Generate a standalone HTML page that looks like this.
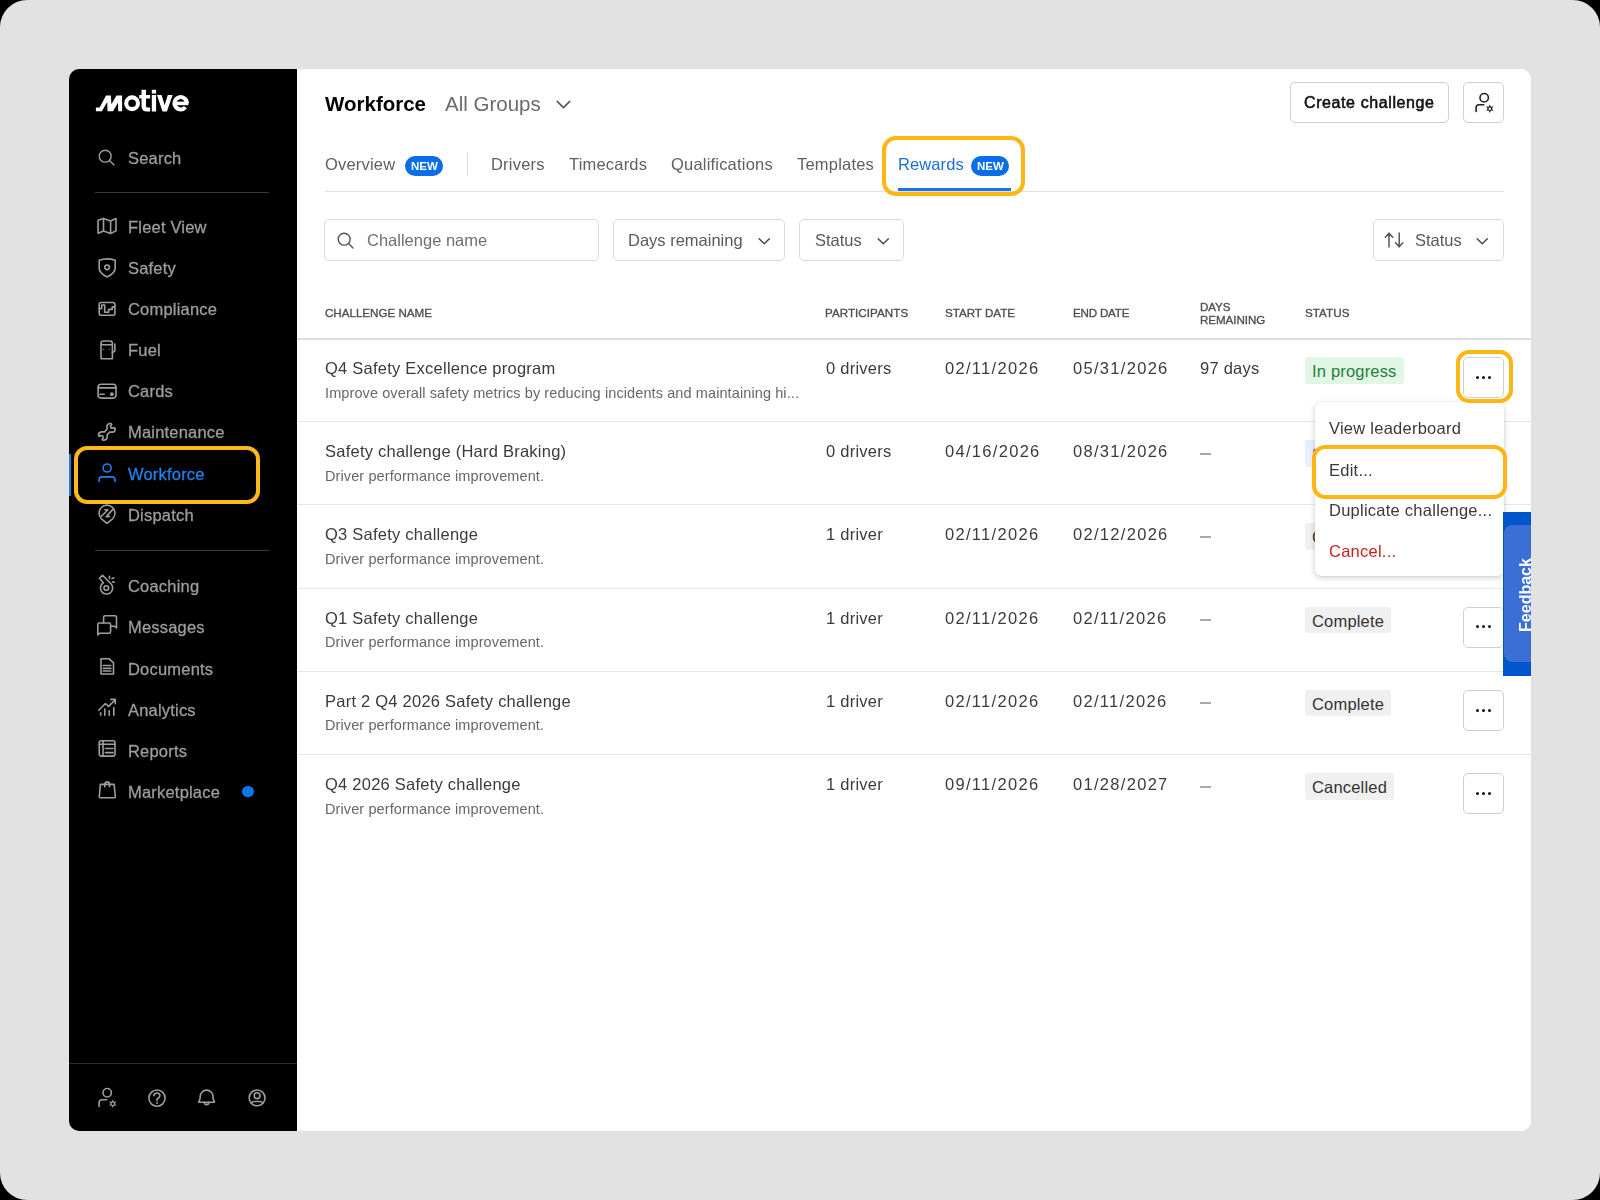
<!DOCTYPE html>
<html><head><meta charset="utf-8">
<style>
*{box-sizing:border-box;margin:0;padding:0}
html,body{width:1600px;height:1200px;overflow:hidden;background:#000}
body{font-family:"Liberation Sans",sans-serif;position:relative}
.a{position:absolute}
.t{position:absolute;line-height:1;white-space:nowrap;will-change:transform}
.ic{position:absolute;fill:none;stroke-linecap:round;stroke-linejoin:round;overflow:visible}
</style></head><body>
<div class="a" style="left:0;top:0;width:1600px;height:1200px;background:#e2e2e2;border-radius:27px"></div>
<div class="a" style="left:69px;top:69px;width:1462px;height:1062px;background:#fff;border-radius:10px"></div>
<div class="a" style="left:69px;top:69px;width:228px;height:1062px;background:#000;border-radius:10px 0 0 10px"></div>

<svg class="a" style="left:0;top:0" width="300" height="130" viewBox="0 0 300 130"><g fill="#fff">
<path d="M95.9 111.3 V107.56 H99.6 L106 95.56 H110.9 L111.4 104.2 L116.5 95.56 H122.1 V111.3 H118.2 L118 102.7 L113 111.3 H107.5 L107.2 102.1 L101.9 111.3 Z"/>
<circle cx="132.1" cy="103.25" r="5.9" fill="none" stroke="#fff" stroke-width="4.1"/>
<path d="M141.5 89.75 H146 V95 H150.1 V98.4 H146 V106 Q146 107.6 147.6 107.6 H150.1 V111.5 H147 Q141.5 111.5 141.5 106 V98.4 H139.25 V95 H141.5 Z"/>
<rect x="151.8" y="89.75" width="4.3" height="3.8"/><rect x="151.8" y="95" width="4.3" height="16.5"/>
<path d="M157 95 H161.6 L164.6 105.2 L167.8 95 H172.6 L166.9 111.5 H162.5 Z"/>
<path d="M186.9 103.25 A6.2 6.2 0 1 0 185.45 107.24" fill="none" stroke="#fff" stroke-width="4"/>
<rect x="174" y="101.6" width="14.4" height="3.6"/>
</g></svg>
<svg class="ic" style="left:96px;top:147px;color:#9d9d9d" width="21" height="21" viewBox="0 0 24 24" stroke="currentColor" stroke-width="1.6"><circle cx="10.5" cy="10.5" r="6.8"/><path d="M15.5 15.5 L20.5 20.5"/></svg>
<div class="t" style="left:128px;top:149.63px;font-size:16.5px;color:#9d9d9d;font-weight:400;letter-spacing:0.2px;-webkit-text-stroke:0.3px #9d9d9d">Search</div>
<div class="a" style="left:95px;top:192px;width:174px;height:1px;background:#3a3a3a"></div>
<svg class="ic" style="left:97px;top:213.2px;color:#9d9d9d" width="26" height="26" viewBox="0 0 26 26" stroke="currentColor" stroke-width="1.6"><path d="M1.1 7.3 L6.5 5.4 L13.6 8.1 L19 5.6 V17.7 L13.6 20.6 L6.5 18.1 L1.1 20.2 Z M6.5 5.4 V18.1 M13.6 8.1 V20.6"/></svg>
<div class="t" style="left:128px;top:218.73px;font-size:16.5px;color:#9d9d9d;font-weight:400;letter-spacing:0.2px;-webkit-text-stroke:0.3px #9d9d9d">Fleet View</div>
<svg class="ic" style="left:97px;top:254.5px;color:#9d9d9d" width="26" height="26" viewBox="0 0 26 26" stroke="currentColor" stroke-width="1.6"><path d="M2.2 5.3 Q10.1 2.4 18.2 5.3 V13 C18.2 17 14.2 20 10.1 22 C6 20 2.2 17 2.2 13 Z"/><circle cx="10.1" cy="12.3" r="2.3"/></svg>
<div class="t" style="left:128px;top:260.03px;font-size:16.5px;color:#9d9d9d;font-weight:400;letter-spacing:0.2px;-webkit-text-stroke:0.3px #9d9d9d">Safety</div>
<svg class="ic" style="left:97px;top:295.6px;color:#9d9d9d" width="26" height="26" viewBox="0 0 26 26" stroke="currentColor" stroke-width="1.6"><rect x="2.2" y="6.5" width="15.7" height="12.7" rx="2"/><path d="M2.2 12.6 H4.7 V9 H7.7 V16.2 H11.6 V13.4 H15.2 V10.9 H17.9"/></svg>
<div class="t" style="left:128px;top:301.13px;font-size:16.5px;color:#9d9d9d;font-weight:400;letter-spacing:0.2px;-webkit-text-stroke:0.3px #9d9d9d">Compliance</div>
<svg class="ic" style="left:97px;top:336.7px;color:#9d9d9d" width="26" height="26" viewBox="0 0 26 26" stroke="currentColor" stroke-width="1.6"><path d="M4 21.7 V6.5 Q4 4 6.5 4 H12.9 Q15.4 4 15.4 6.5 V21.7 Z M4 7.8 H15.4"/><path d="M15.4 15.3 Q17.9 15.3 17.9 12.8 V7"/><circle cx="6.6" cy="12.3" r=".6" fill="currentColor" stroke="none"/><circle cx="12.1" cy="12.3" r=".6" fill="currentColor" stroke="none"/></svg>
<div class="t" style="left:128px;top:342.23px;font-size:16.5px;color:#9d9d9d;font-weight:400;letter-spacing:0.2px;-webkit-text-stroke:0.3px #9d9d9d">Fuel</div>
<svg class="ic" style="left:97px;top:377.8px;color:#9d9d9d" width="26" height="26" viewBox="0 0 26 26" stroke="currentColor" stroke-width="1.6"><rect x="1.1" y="6.3" width="17.9" height="13.8" rx="3"/><path d="M1.1 9.9 H19 M3 16.2 H7.2"/><circle cx="14.9" cy="16.2" r="1.9" fill="currentColor" stroke="none"/></svg>
<div class="t" style="left:128px;top:383.33px;font-size:16.5px;color:#9d9d9d;font-weight:400;letter-spacing:0.2px;-webkit-text-stroke:0.3px #9d9d9d">Cards</div>
<svg class="ic" style="left:97px;top:418.9px;color:#9d9d9d" width="26" height="26" viewBox="0 0 26 26" stroke="currentColor" stroke-width="1.6"><path d="M10 6.9 Q10.5 4.8 13.6 4.3 L14.8 5.3 L13.6 7.1 Q13.8 9.3 15.4 9.3 L17.2 8.5 L18.2 9.7 Q18.2 13.1 15.5 13.1 H12.8 L10.2 15.7 V18.5 Q9.8 20.8 6.4 21.3 L5.2 20.5 L6.4 18.3 Q6 16.5 4 16.5 L2 17.5 L1.4 16.3 Q1.8 12.9 4.8 12.9 H7.4 L10 10.3 Z"/></svg>
<div class="t" style="left:128px;top:424.43px;font-size:16.5px;color:#9d9d9d;font-weight:400;letter-spacing:0.2px;-webkit-text-stroke:0.3px #9d9d9d">Maintenance</div>
<svg class="ic" style="left:97px;top:460px;color:#1f82ec" width="26" height="26" viewBox="0 0 26 26" stroke="currentColor" stroke-width="1.6"><circle cx="10.1" cy="8" r="4"/><path d="M2.1 21.6 V19.9 Q2.1 16.9 5.1 16.9 H15 Q18 16.9 18 19.9 V21.6"/></svg>
<div class="t" style="left:128px;top:465.53px;font-size:16.5px;color:#1f82ec;font-weight:400;letter-spacing:0.2px;-webkit-text-stroke:0.3px #1f82ec">Workforce</div>
<svg class="ic" style="left:97px;top:501.1px;color:#9d9d9d" width="26" height="26" viewBox="0 0 26 26" stroke="currentColor" stroke-width="1.6"><path d="M10 22.3 L4.34 17.76 A8 8 0 1 1 15.66 17.76 Z"/><path d="M7.9 8.8 H10.9 L4.4 15.2 M15.9 8.4 L9.3 15.6 H12.3"/></svg>
<div class="t" style="left:128px;top:506.63px;font-size:16.5px;color:#9d9d9d;font-weight:400;letter-spacing:0.2px;-webkit-text-stroke:0.3px #9d9d9d">Dispatch</div>
<svg class="ic" style="left:97px;top:572.5px;color:#9d9d9d" width="26" height="26" viewBox="0 0 26 26" stroke="currentColor" stroke-width="1.6"><path d="M6.3 9.8 L2.5 5.3 L5.5 2.3 L14.2 11 A6.1 6.1 0 1 1 6.3 9.8 Z"/><circle cx="9.3" cy="15" r="2.3"/><path d="M12.5 3.3 V5.5 M15.1 5.6 L16.8 4.8 M15.7 8.9 L17.4 9.2"/></svg>
<div class="t" style="left:128px;top:578.03px;font-size:16.5px;color:#9d9d9d;font-weight:400;letter-spacing:0.2px;-webkit-text-stroke:0.3px #9d9d9d">Coaching</div>
<svg class="ic" style="left:97px;top:613.75px;color:#9d9d9d" width="26" height="26" viewBox="0 0 26 26" stroke="currentColor" stroke-width="1.6"><path d="M6.6 9.05 V3.3 Q6.6 1.8 8.1 1.8 H18 Q19.5 1.8 19.5 3.3 V14 L17.7 12.25 H13.6"/><path d="M0.8 21 V10.55 Q0.8 9.05 2.3 9.05 H12.1 Q13.6 9.05 13.6 10.55 V17.8 Q13.6 19.3 12.1 19.3 H2.5 Z"/></svg>
<div class="t" style="left:128px;top:619.28px;font-size:16.5px;color:#9d9d9d;font-weight:400;letter-spacing:0.2px;-webkit-text-stroke:0.3px #9d9d9d">Messages</div>
<svg class="ic" style="left:97px;top:655px;color:#9d9d9d" width="26" height="26" viewBox="0 0 26 26" stroke="currentColor" stroke-width="1.6"><path d="M4 3.8 H12.2 L16.5 7.9 V19 H4 Z M6.3 10.5 H13.9 M6.3 13.4 H13.9 M6.3 16 H13.9"/></svg>
<div class="t" style="left:128px;top:660.53px;font-size:16.5px;color:#9d9d9d;font-weight:400;letter-spacing:0.2px;-webkit-text-stroke:0.3px #9d9d9d">Documents</div>
<svg class="ic" style="left:97px;top:696.25px;color:#9d9d9d" width="26" height="26" viewBox="0 0 26 26" stroke="currentColor" stroke-width="1.6"><path d="M1.7 14.2 L8.4 7.5 L11.6 10.4 L18.3 3.7 M13.9 3.4 H18.3 V7.8"/><path d="M3.7 16.8 V19.2 M7.8 13 V19.2 M12.2 14.8 V19.2 M16.8 11.5 V19.2"/></svg>
<div class="t" style="left:128px;top:701.78px;font-size:16.5px;color:#9d9d9d;font-weight:400;letter-spacing:0.2px;-webkit-text-stroke:0.3px #9d9d9d">Analytics</div>
<svg class="ic" style="left:97px;top:737px;color:#9d9d9d" width="26" height="26" viewBox="0 0 26 26" stroke="currentColor" stroke-width="1.6"><rect x="2.25" y="3.7" width="15.75" height="15.4" rx="2"/><path d="M2.25 7.2 H18 M6.05 3.7 V19.1 M8.4 11.5 H16 M8.4 15.6 H16"/></svg>
<div class="t" style="left:128px;top:742.53px;font-size:16.5px;color:#9d9d9d;font-weight:400;letter-spacing:0.2px;-webkit-text-stroke:0.3px #9d9d9d">Reports</div>
<svg class="ic" style="left:97px;top:778px;color:#9d9d9d" width="26" height="26" viewBox="0 0 26 26" stroke="currentColor" stroke-width="1.6"><path d="M3.4 6.4 H17.1 L18.3 18.3 Q18.4 19.8 16.9 19.8 H3.7 Q2.2 19.8 2.3 18.3 Z"/><path d="M7.8 8.75 V6.2 A2.35 2.35 0 0 1 12.5 6.2 V8.75"/></svg>
<div class="t" style="left:128px;top:783.53px;font-size:16.5px;color:#9d9d9d;font-weight:400;letter-spacing:0.2px;-webkit-text-stroke:0.3px #9d9d9d">Marketplace</div>
<div class="a" style="left:95px;top:550px;width:174px;height:1px;background:#3a3a3a"></div>
<div class="a" style="left:242px;top:785.7px;width:11.5px;height:11.5px;border-radius:50%;background:#0e74ea"></div>
<div class="a" style="left:69px;top:1063px;width:228px;height:1px;background:#2e2e2e"></div>
<svg class="ic" style="left:97px;top:1086px;color:#9d9d9d" width="26" height="26" viewBox="0 0 26 26" stroke="currentColor" stroke-width="1.6"><circle cx="10.2" cy="6.75" r="4.2"/><path d="M2.1 20.4 V16.8 Q2.1 13.8 5.1 13.8 H9.7"/><path d="M15.8 13.4 L16.9 15.8 L19.5 15.6 L18 17.7 L19.5 19.8 L16.9 19.6 L15.8 22 L14.7 19.6 L12.1 19.8 L13.6 17.7 L12.1 15.6 L14.7 15.8 Z" fill="currentColor" stroke="none"/><circle cx="15.8" cy="17.7" r="1.2" fill="#000" stroke="none"/></svg>
<svg class="ic" style="left:147.4px;top:1086px;color:#9d9d9d" width="26" height="26" viewBox="0 0 26 26" stroke="currentColor" stroke-width="1.6"><circle cx="10" cy="12.1" r="8.1"/><path d="M6.9 9.6 Q7.2 7 10 7 Q12.9 7 12.9 9.8 Q12.9 11.6 10 13.2 V14.8"/><circle cx="10" cy="17" r=".9" fill="currentColor" stroke="none"/></svg>
<svg class="ic" style="left:197px;top:1086px;color:#9d9d9d" width="26" height="26" viewBox="0 0 26 26" stroke="currentColor" stroke-width="1.6"><path d="M2.2 16.2 Q1.2 16.2 2.4 14.6 Q3.2 13.4 3.2 10.5 A6.4 6.4 0 0 1 16 10.5 Q16 13.4 16.8 14.6 Q18 16.2 17 16.2 Z"/><path d="M7.4 16.4 A2.2 2.2 0 0 0 11.8 16.4"/></svg>
<svg class="ic" style="left:247px;top:1086px;color:#9d9d9d" width="26" height="26" viewBox="0 0 26 26" stroke="currentColor" stroke-width="1.6"><circle cx="10.1" cy="11.9" r="7.9"/><circle cx="10.1" cy="9.7" r="2.9"/><path d="M4.3 17.4 Q5 15.5 7.5 15.5 H12.7 Q15.2 15.5 15.9 17.4"/></svg>
<div class="a" style="left:69px;top:453.5px;width:2px;height:42px;background:#1a7fe0"></div>
<div class="a" style="left:74px;top:445.7px;width:185.7px;height:58px;border:4.6px solid #fdb91c;border-radius:13px"></div>
<div class="t" style="left:325px;top:93.55px;font-size:20.5px;color:#000;font-weight:700;letter-spacing:0px">Workforce</div>
<div class="t" style="left:445px;top:93.55px;font-size:20.5px;color:#6b6b6b;font-weight:400;letter-spacing:0px">All Groups</div>
<svg class="ic" style="left:551px;top:92.1px;color:#555" width="25" height="25" viewBox="0 0 24 24" stroke="currentColor" stroke-width="1.45"><path d="M6 9 L12 15 L18 9"/></svg>
<div class="a" style="left:1289.7px;top:82.2px;width:159.5px;height:40.8px;border:1.3px solid #d0d0d0;border-radius:5px"></div>
<div class="t" style="left:1304px;top:95.36px;font-size:16px;color:#111;font-weight:400;letter-spacing:0.6px;-webkit-text-stroke:0.55px #111">Create challenge</div>
<div class="a" style="left:1463.3px;top:82.2px;width:40.7px;height:40.8px;border:1.3px solid #d0d0d0;border-radius:5px"></div>
<svg class="ic" style="left:1473.5px;top:91.25px;color:#222" width="26" height="26" viewBox="0 0 26 26" stroke="currentColor" stroke-width="1.6"><circle cx="10.2" cy="6.75" r="4.2"/><path d="M2.1 20.4 V16.8 Q2.1 13.8 5.1 13.8 H9.7"/><path d="M15.8 13.4 L16.9 15.8 L19.5 15.6 L18 17.7 L19.5 19.8 L16.9 19.6 L15.8 22 L14.7 19.6 L12.1 19.8 L13.6 17.7 L12.1 15.6 L14.7 15.8 Z" fill="currentColor" stroke="none"/><circle cx="15.8" cy="17.7" r="1.2" fill="#fff" stroke="none"/></svg>
<div class="t" style="left:325px;top:156.13px;font-size:16.5px;color:#5f5f5f;font-weight:400;letter-spacing:0.2px">Overview</div>
<div class="a" style="left:405px;top:155.5px;width:38.3px;height:20px;border-radius:10px;background:#0a6ee6"></div>
<div class="t" style="left:411.3px;top:160.77px;font-size:11.5px;color:#fff;font-weight:700;letter-spacing:0px">NEW</div>
<div class="a" style="left:466.5px;top:153px;width:1.5px;height:22.5px;background:#d9d9d9"></div>
<div class="t" style="left:491px;top:156.13px;font-size:16.5px;color:#5f5f5f;font-weight:400;letter-spacing:0.2px">Drivers</div>
<div class="t" style="left:569px;top:156.13px;font-size:16.5px;color:#5f5f5f;font-weight:400;letter-spacing:0.2px">Timecards</div>
<div class="t" style="left:670.7px;top:156.13px;font-size:16.5px;color:#5f5f5f;font-weight:400;letter-spacing:0.2px">Qualifications</div>
<div class="t" style="left:797.3px;top:156.13px;font-size:16.5px;color:#5f5f5f;font-weight:400;letter-spacing:0.2px">Templates</div>
<div class="t" style="left:897.5px;top:156.13px;font-size:16.5px;color:#1a6fd6;font-weight:400;letter-spacing:0.1px">Rewards</div>
<div class="a" style="left:971px;top:155.5px;width:38.3px;height:20px;border-radius:10px;background:#0a6ee6"></div>
<div class="t" style="left:977.3px;top:160.77px;font-size:11.5px;color:#fff;font-weight:700;letter-spacing:0px">NEW</div>
<div class="a" style="left:325px;top:190.5px;width:1179px;height:1px;background:#e0e0e0"></div>
<div class="a" style="left:897.5px;top:188px;width:113px;height:3px;background:#1a73e0"></div>
<div class="a" style="left:882px;top:135.8px;width:143.1px;height:60.7px;border:4.5px solid #fdb614;border-radius:14px"></div>
<div class="a" style="left:324.2px;top:219.2px;width:274.6px;height:41.6px;border:1.5px solid #dadada;border-radius:5px"></div>
<svg class="ic" style="left:335px;top:229.5px;color:#555" width="21" height="21" viewBox="0 0 24 24" stroke="currentColor" stroke-width="1.6"><circle cx="10.5" cy="10.5" r="6.8"/><path d="M15.5 15.5 L20.5 20.5"/></svg>
<div class="t" style="left:367px;top:231.63px;font-size:16.5px;color:#707070;font-weight:400;letter-spacing:0px">Challenge name</div>
<div class="a" style="left:612.5px;top:219.2px;width:172.2px;height:41.6px;border:1.5px solid #dadada;border-radius:5px"></div>
<div class="t" style="left:627.6px;top:231.63px;font-size:16.5px;color:#5a5a5a;font-weight:400;letter-spacing:0px">Days remaining</div>
<svg class="ic" style="left:753.6px;top:231.3px;color:#444" width="20.5" height="20.5" viewBox="0 0 24 24" stroke="currentColor" stroke-width="1.6"><path d="M6 9 L12 15 L18 9"/></svg>
<div class="a" style="left:799.2px;top:219.2px;width:104.8px;height:41.6px;border:1.5px solid #dadada;border-radius:5px"></div>
<div class="t" style="left:815px;top:231.63px;font-size:16.5px;color:#5a5a5a;font-weight:400;letter-spacing:0px">Status</div>
<svg class="ic" style="left:872.6px;top:231.3px;color:#444" width="20.5" height="20.5" viewBox="0 0 24 24" stroke="currentColor" stroke-width="1.6"><path d="M6 9 L12 15 L18 9"/></svg>
<div class="a" style="left:1373.2px;top:219.2px;width:130.8px;height:41.6px;border:1.5px solid #dadada;border-radius:5px"></div>
<svg class="ic" style="left:1380px;top:228px" width="30" height="24" viewBox="0 0 30 24" stroke="#555" stroke-width="1.5"><path d="M9 5 V19 M5.3 9.2 L9 5.2 L12.7 9.2 M19.2 5 V19 M15.5 14.8 L19.2 18.8 L22.9 14.8"/></svg>
<div class="t" style="left:1415.4px;top:231.63px;font-size:16.5px;color:#5a5a5a;font-weight:400;letter-spacing:0px">Status</div>
<svg class="ic" style="left:1472.2px;top:231.3px;color:#444" width="20.5" height="20.5" viewBox="0 0 24 24" stroke="currentColor" stroke-width="1.6"><path d="M6 9 L12 15 L18 9"/></svg>
<div class="t" style="left:325px;top:307.28px;font-size:11.6px;color:#4f4f4f;font-weight:400;letter-spacing:0.0px;-webkit-text-stroke:0.35px #4f4f4f">CHALLENGE NAME</div>
<div class="t" style="left:825.3px;top:307.28px;font-size:11.6px;color:#4f4f4f;font-weight:400;letter-spacing:0.06px;-webkit-text-stroke:0.35px #4f4f4f">PARTICIPANTS</div>
<div class="t" style="left:944.75px;top:307.28px;font-size:11.6px;color:#4f4f4f;font-weight:400;letter-spacing:0.0px;-webkit-text-stroke:0.35px #4f4f4f">START DATE</div>
<div class="t" style="left:1072.5px;top:307.28px;font-size:11.6px;color:#4f4f4f;font-weight:400;letter-spacing:-0.2px;-webkit-text-stroke:0.35px #4f4f4f">END DATE</div>
<div class="t" style="left:1200px;top:300.78px;font-size:11.6px;color:#4f4f4f;font-weight:400;letter-spacing:-0.1px;-webkit-text-stroke:0.35px #4f4f4f">DAYS</div>
<div class="t" style="left:1200px;top:314.38px;font-size:11.6px;color:#4f4f4f;font-weight:400;letter-spacing:-0.05px;-webkit-text-stroke:0.35px #4f4f4f">REMAINING</div>
<div class="t" style="left:1305.4px;top:307.28px;font-size:11.6px;color:#4f4f4f;font-weight:400;letter-spacing:0.08px;-webkit-text-stroke:0.35px #4f4f4f">STATUS</div>
<div class="a" style="left:297px;top:338px;width:1234px;height:2px;background:#dcdcdc"></div>
<div class="t" style="left:325px;top:360.03px;font-size:16.5px;color:#3b3b3b;font-weight:400;letter-spacing:0.24px">Q4 Safety Excellence program</div>
<div class="t" style="left:325px;top:385.53px;font-size:14.5px;color:#676767;font-weight:400;letter-spacing:0.1px">Improve overall safety metrics by reducing incidents and maintaining hi...</div>
<div class="t" style="left:825.5px;top:360.03px;font-size:16.5px;color:#3b3b3b;font-weight:400;letter-spacing:0.25px">0 drivers</div>
<div class="t" style="left:945px;top:360.03px;font-size:16.5px;color:#3b3b3b;font-weight:400;letter-spacing:1.3px">02/11/2026</div>
<div class="t" style="left:1072.5px;top:360.03px;font-size:16.5px;color:#3b3b3b;font-weight:400;letter-spacing:1.3px">05/31/2026</div>
<div class="t" style="left:1200.3px;top:360.03px;font-size:16.5px;color:#3b3b3b;font-weight:400;letter-spacing:0.25px">97 days</div>
<div class="a" style="left:1305px;top:357.0px;height:26.7px;padding:0 7px;background:#e2f6e6;border-radius:3px;font-size:16.5px;line-height:28.6px;overflow:hidden;letter-spacing:0.18px;color:#25803c;white-space:nowrap">In progress</div>
<div class="a" style="left:1463px;top:356.9px;width:41px;height:41px;border:1.2px solid #cfcfcf;border-radius:5px;background:#fff"></div>
<div class="a" style="left:1476.3px;top:375.7px;width:3.2px;height:3.2px;border-radius:50%;background:#111"></div>
<div class="a" style="left:1482.1px;top:375.7px;width:3.2px;height:3.2px;border-radius:50%;background:#111"></div>
<div class="a" style="left:1487.9px;top:375.7px;width:3.2px;height:3.2px;border-radius:50%;background:#111"></div>
<div class="a" style="left:297px;top:421.2px;width:1234px;height:1px;background:#e6e6e6"></div>
<div class="t" style="left:325px;top:443.23px;font-size:16.5px;color:#3b3b3b;font-weight:400;letter-spacing:0.24px">Safety challenge (Hard Braking)</div>
<div class="t" style="left:325px;top:468.73px;font-size:14.5px;color:#676767;font-weight:400;letter-spacing:0.1px">Driver performance improvement.</div>
<div class="t" style="left:825.5px;top:443.23px;font-size:16.5px;color:#3b3b3b;font-weight:400;letter-spacing:0.25px">0 drivers</div>
<div class="t" style="left:945px;top:443.23px;font-size:16.5px;color:#3b3b3b;font-weight:400;letter-spacing:1.3px">04/16/2026</div>
<div class="t" style="left:1072.5px;top:443.23px;font-size:16.5px;color:#3b3b3b;font-weight:400;letter-spacing:1.3px">08/31/2026</div>
<div class="a" style="left:1199.5px;top:453px;width:11.3px;height:1.5px;background:#a9a9a9"></div>
<div class="a" style="left:1305px;top:440.2px;height:26.7px;padding:0 7px;background:#e5f0fc;border-radius:3px;font-size:16.5px;line-height:28.6px;overflow:hidden;letter-spacing:0.18px;color:#1a5fb4;white-space:nowrap">Scheduled</div>
<div class="a" style="left:1463px;top:440.1px;width:41px;height:41px;border:1.2px solid #cfcfcf;border-radius:5px;background:#fff"></div>
<div class="a" style="left:1476.3px;top:458.9px;width:3.2px;height:3.2px;border-radius:50%;background:#111"></div>
<div class="a" style="left:1482.1px;top:458.9px;width:3.2px;height:3.2px;border-radius:50%;background:#111"></div>
<div class="a" style="left:1487.9px;top:458.9px;width:3.2px;height:3.2px;border-radius:50%;background:#111"></div>
<div class="a" style="left:297px;top:504.4px;width:1234px;height:1px;background:#e6e6e6"></div>
<div class="t" style="left:325px;top:526.43px;font-size:16.5px;color:#3b3b3b;font-weight:400;letter-spacing:0.24px">Q3 Safety challenge</div>
<div class="t" style="left:325px;top:551.93px;font-size:14.5px;color:#676767;font-weight:400;letter-spacing:0.1px">Driver performance improvement.</div>
<div class="t" style="left:825.5px;top:526.43px;font-size:16.5px;color:#3b3b3b;font-weight:400;letter-spacing:0.25px">1 driver</div>
<div class="t" style="left:945px;top:526.43px;font-size:16.5px;color:#3b3b3b;font-weight:400;letter-spacing:1.3px">02/11/2026</div>
<div class="t" style="left:1072.5px;top:526.43px;font-size:16.5px;color:#3b3b3b;font-weight:400;letter-spacing:1.3px">02/12/2026</div>
<div class="a" style="left:1199.5px;top:536px;width:11.3px;height:1.5px;background:#a9a9a9"></div>
<div class="a" style="left:1305px;top:523.4px;height:26.7px;padding:0 7px;background:#f0f0f0;border-radius:3px;font-size:16.5px;line-height:28.6px;overflow:hidden;letter-spacing:0.18px;color:#333;white-space:nowrap">Complete</div>
<div class="a" style="left:1463px;top:523.3px;width:41px;height:41px;border:1.2px solid #cfcfcf;border-radius:5px;background:#fff"></div>
<div class="a" style="left:1476.3px;top:542.1px;width:3.2px;height:3.2px;border-radius:50%;background:#111"></div>
<div class="a" style="left:1482.1px;top:542.1px;width:3.2px;height:3.2px;border-radius:50%;background:#111"></div>
<div class="a" style="left:1487.9px;top:542.1px;width:3.2px;height:3.2px;border-radius:50%;background:#111"></div>
<div class="a" style="left:297px;top:587.6px;width:1234px;height:1px;background:#e6e6e6"></div>
<div class="t" style="left:325px;top:609.63px;font-size:16.5px;color:#3b3b3b;font-weight:400;letter-spacing:0.24px">Q1 Safety challenge</div>
<div class="t" style="left:325px;top:635.13px;font-size:14.5px;color:#676767;font-weight:400;letter-spacing:0.1px">Driver performance improvement.</div>
<div class="t" style="left:825.5px;top:609.63px;font-size:16.5px;color:#3b3b3b;font-weight:400;letter-spacing:0.25px">1 driver</div>
<div class="t" style="left:945px;top:609.63px;font-size:16.5px;color:#3b3b3b;font-weight:400;letter-spacing:1.3px">02/11/2026</div>
<div class="t" style="left:1072.5px;top:609.63px;font-size:16.5px;color:#3b3b3b;font-weight:400;letter-spacing:1.3px">02/11/2026</div>
<div class="a" style="left:1199.5px;top:619px;width:11.3px;height:1.5px;background:#a9a9a9"></div>
<div class="a" style="left:1305px;top:606.6px;height:26.7px;padding:0 7px;background:#f0f0f0;border-radius:3px;font-size:16.5px;line-height:28.6px;overflow:hidden;letter-spacing:0.18px;color:#333;white-space:nowrap">Complete</div>
<div class="a" style="left:1463px;top:606.5px;width:41px;height:41px;border:1.2px solid #cfcfcf;border-radius:5px;background:#fff"></div>
<div class="a" style="left:1476.3px;top:625.3px;width:3.2px;height:3.2px;border-radius:50%;background:#111"></div>
<div class="a" style="left:1482.1px;top:625.3px;width:3.2px;height:3.2px;border-radius:50%;background:#111"></div>
<div class="a" style="left:1487.9px;top:625.3px;width:3.2px;height:3.2px;border-radius:50%;background:#111"></div>
<div class="a" style="left:297px;top:670.8px;width:1234px;height:1px;background:#e6e6e6"></div>
<div class="t" style="left:325px;top:692.83px;font-size:16.5px;color:#3b3b3b;font-weight:400;letter-spacing:0.24px">Part 2 Q4 2026 Safety challenge</div>
<div class="t" style="left:325px;top:718.33px;font-size:14.5px;color:#676767;font-weight:400;letter-spacing:0.1px">Driver performance improvement.</div>
<div class="t" style="left:825.5px;top:692.83px;font-size:16.5px;color:#3b3b3b;font-weight:400;letter-spacing:0.25px">1 driver</div>
<div class="t" style="left:945px;top:692.83px;font-size:16.5px;color:#3b3b3b;font-weight:400;letter-spacing:1.3px">02/11/2026</div>
<div class="t" style="left:1072.5px;top:692.83px;font-size:16.5px;color:#3b3b3b;font-weight:400;letter-spacing:1.3px">02/11/2026</div>
<div class="a" style="left:1199.5px;top:702px;width:11.3px;height:1.5px;background:#a9a9a9"></div>
<div class="a" style="left:1305px;top:689.8px;height:26.7px;padding:0 7px;background:#f0f0f0;border-radius:3px;font-size:16.5px;line-height:28.6px;overflow:hidden;letter-spacing:0.18px;color:#333;white-space:nowrap">Complete</div>
<div class="a" style="left:1463px;top:689.7px;width:41px;height:41px;border:1.2px solid #cfcfcf;border-radius:5px;background:#fff"></div>
<div class="a" style="left:1476.3px;top:708.5px;width:3.2px;height:3.2px;border-radius:50%;background:#111"></div>
<div class="a" style="left:1482.1px;top:708.5px;width:3.2px;height:3.2px;border-radius:50%;background:#111"></div>
<div class="a" style="left:1487.9px;top:708.5px;width:3.2px;height:3.2px;border-radius:50%;background:#111"></div>
<div class="a" style="left:297px;top:754.0px;width:1234px;height:1px;background:#e6e6e6"></div>
<div class="t" style="left:325px;top:776.03px;font-size:16.5px;color:#3b3b3b;font-weight:400;letter-spacing:0.24px">Q4 2026 Safety challenge</div>
<div class="t" style="left:325px;top:801.53px;font-size:14.5px;color:#676767;font-weight:400;letter-spacing:0.1px">Driver performance improvement.</div>
<div class="t" style="left:825.5px;top:776.03px;font-size:16.5px;color:#3b3b3b;font-weight:400;letter-spacing:0.25px">1 driver</div>
<div class="t" style="left:945px;top:776.03px;font-size:16.5px;color:#3b3b3b;font-weight:400;letter-spacing:1.3px">09/11/2026</div>
<div class="t" style="left:1072.5px;top:776.03px;font-size:16.5px;color:#3b3b3b;font-weight:400;letter-spacing:1.3px">01/28/2027</div>
<div class="a" style="left:1199.5px;top:786px;width:11.3px;height:1.5px;background:#a9a9a9"></div>
<div class="a" style="left:1305px;top:773.0px;height:26.7px;padding:0 7px;background:#f0f0f0;border-radius:3px;font-size:16.5px;line-height:28.6px;overflow:hidden;letter-spacing:0.18px;color:#333;white-space:nowrap">Cancelled</div>
<div class="a" style="left:1463px;top:772.9px;width:41px;height:41px;border:1.2px solid #cfcfcf;border-radius:5px;background:#fff"></div>
<div class="a" style="left:1476.3px;top:791.7px;width:3.2px;height:3.2px;border-radius:50%;background:#111"></div>
<div class="a" style="left:1482.1px;top:791.7px;width:3.2px;height:3.2px;border-radius:50%;background:#111"></div>
<div class="a" style="left:1487.9px;top:791.7px;width:3.2px;height:3.2px;border-radius:50%;background:#111"></div>
<div class="a" style="left:1315px;top:402px;width:189px;height:174px;background:#fff;border-radius:6px;box-shadow:0 2px 6px rgba(0,0,0,.18),0 0 1px rgba(0,0,0,.2)"></div>
<div class="t" style="left:1329.3px;top:420.03px;font-size:16.5px;color:#3a3a3a;font-weight:400;letter-spacing:0.25px">View leaderboard</div>
<div class="t" style="left:1329.3px;top:462.03px;font-size:16.5px;color:#3a3a3a;font-weight:400;letter-spacing:0.25px">Edit...</div>
<div class="t" style="left:1329.3px;top:502.03px;font-size:16.5px;color:#3a3a3a;font-weight:400;letter-spacing:0.25px">Duplicate challenge...</div>
<div class="t" style="left:1329.3px;top:543.33px;font-size:16.5px;color:#c82121;font-weight:400;letter-spacing:0.25px">Cancel...</div>
<div class="a" style="left:1312.2px;top:444.8px;width:195px;height:54.1px;border:4.2px solid #fdb614;border-radius:13px"></div>
<div class="a" style="left:1456px;top:349.9px;width:56.9px;height:53.1px;border:4.2px solid #fdb614;border-radius:13px"></div>
<div class="a" style="left:1502.5px;top:511.7px;width:28.5px;height:164px;background:#0055cc;overflow:hidden">
<div class="a" style="left:1px;top:13.3px;width:40px;height:137.5px;background:#3b6fd6;border-radius:8px"></div>
<div class="t" style="left:-36.3px;top:75px;width:120px;text-align:center;transform:rotate(-90deg);font-size:16px;font-weight:700;color:#fff">Feedback</div>
</div>
</body></html>
